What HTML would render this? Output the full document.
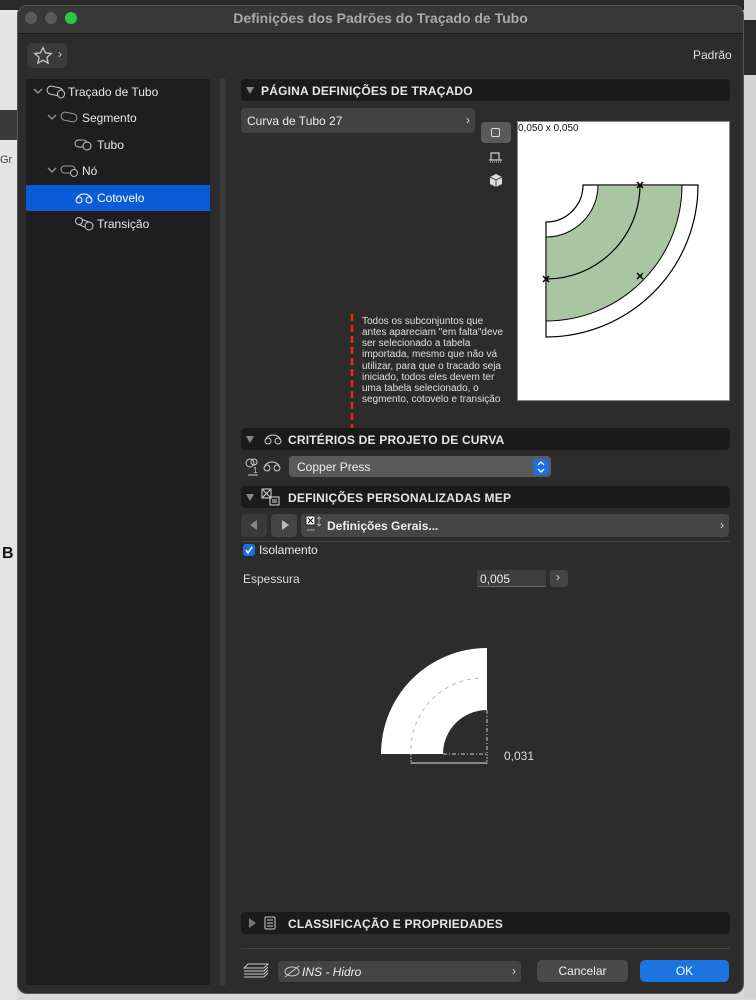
<!DOCTYPE html>
<html><head><meta charset="utf-8">
<style>
*{margin:0;padding:0;box-sizing:border-box}
body{width:756px;height:999px;overflow:hidden;background:#d9d9d9;font-family:"Liberation Sans",sans-serif;position:relative}
.a{position:absolute}
.t{position:absolute;white-space:nowrap}
.hdr{position:absolute;left:241px;width:489px;height:22px;background:#1b1b1b;border-radius:4px}
.hdr .tx{position:absolute;top:5px;font-size:12px;font-weight:bold;color:#e6e6e6;letter-spacing:.2px}
.tri{position:absolute;left:5px;top:8px;width:0;height:0;border-left:4px solid transparent;border-right:4px solid transparent;border-top:7px solid #8a8a8a}
.row{position:absolute;left:26px;width:184px;height:26px;font-size:12px;color:#e8e8e8}
.row span{position:absolute;top:6px}
.chev{position:absolute;top:9px}
</style></head><body>
<div class="a" style="left:0;top:0;width:756px;height:10px;background:#2a2a2a"></div>
<div class="a" style="left:0;top:10px;width:17px;height:990px;background:#e4e4e4"></div>
<div class="a" style="left:0;top:110px;width:17px;height:30px;background:#3a3a3a"></div>
<div class="t" style="left:0;top:154px;font-size:11px;color:#444">Gr</div>
<div class="t" style="left:2px;top:545px;font-size:16px;font-weight:bold;color:#111">B</div>
<div class="a" style="left:744px;top:0;width:12px;height:999px;background:#d4d4d4"></div>
<div class="a" style="left:744px;top:20px;width:12px;height:55px;background:#2a2a2a"></div>
<div class="a" style="left:17px;top:5px;width:727px;height:989px;background:#2c2c2c;border-radius:10px;border:1px solid #555;overflow:hidden">
  <div class="a" style="left:0;top:0;width:727px;height:28px;background:#383838;border-bottom:1px solid #1a1a1a"></div>
</div>
<div class="a" style="left:25px;top:12px;width:12px;height:12px;border-radius:50%;background:#5a5a5a"></div>
<div class="a" style="left:45px;top:12px;width:12px;height:12px;border-radius:50%;background:#5a5a5a"></div>
<div class="a" style="left:65px;top:12px;width:12px;height:12px;border-radius:50%;background:#2ac840"></div>
<div class="t" style="left:17px;width:727px;text-align:center;top:10px;font-size:14px;font-weight:bold;color:#a9a9a9">Definições dos Padrões do Traçado de Tubo</div>
<div class="a" style="left:27px;top:43px;width:40px;height:25px;background:#3b3b3b;border-radius:5px"></div>
<svg class="a" style="left:33px;top:46px" width="20" height="19" viewBox="0 0 20 19"><path d="M10 1.5l2.5 5.4 5.8.6-4.4 3.9 1.3 5.8L10 14.2l-5.2 3 1.3-5.8L1.7 7.5l5.8-.6z" fill="none" stroke="#cfcfcf" stroke-width="1.2"/></svg>
<div class="t" style="left:58px;top:47px;font-size:12px;color:#ccc">›</div>
<div class="t" style="left:693px;top:48px;font-size:12px;color:#e0e0e0">Padrão</div>
<div class="a" style="left:26px;top:79px;width:184px;height:906px;background:#1e1e1e"></div>
<div class="a" style="left:220px;top:79px;width:6px;height:906px;background:#393939"></div>
<div class="row" style="top:79px"><svg class="chev" style="left:7px" width="10" height="7"><path d="M1 1l4 4 4-4" fill="none" stroke="#999" stroke-width="1.3"/></svg><svg class="a" style="left:20px;top:6px" width="20" height="14"><rect x="1" y="2" width="16" height="8" rx="4" transform="rotate(12 9 6)" fill="none" stroke="#ccc"/><ellipse cx="15" cy="9" rx="3.5" ry="4" fill="#1e1e1e" stroke="#ccc"/></svg><span style="left:42px">Traçado de Tubo</span></div>
<div class="row" style="top:105px"><svg class="chev" style="left:21px" width="10" height="7"><path d="M1 1l4 4 4-4" fill="none" stroke="#999" stroke-width="1.3"/></svg><svg class="a" style="left:34px;top:6px" width="20" height="14"><rect x="1" y="2" width="16" height="8" rx="4" transform="rotate(12 9 6)" fill="none" stroke="#999"/></svg><span style="left:56px">Segmento</span></div>
<div class="row" style="top:132px"><svg class="a" style="left:48px;top:6px" width="20" height="14"><rect x="1" y="2" width="12" height="7" rx="3.5" fill="none" stroke="#bbb"/><circle cx="13" cy="8" r="4" fill="#1e1e1e" stroke="#ccc"/></svg><span style="left:71px">Tubo</span></div>
<div class="row" style="top:158px"><svg class="chev" style="left:21px" width="10" height="7"><path d="M1 1l4 4 4-4" fill="none" stroke="#999" stroke-width="1.3"/></svg><svg class="a" style="left:34px;top:6px" width="20" height="15"><rect x="1" y="2" width="14" height="7" rx="3.5" fill="none" stroke="#999"/><circle cx="14" cy="9" r="3.5" fill="#1e1e1e" stroke="#bbb"/></svg><span style="left:56px">Nó</span></div>
<div class="row" style="top:185px;background:#0a5cd6"><svg class="a" style="left:48px;top:7px" width="20" height="13"><path d="M3 7a7 5 0 0 1 14 0" fill="none" stroke="#fff"/><circle cx="5" cy="8" r="3" fill="none" stroke="#fff"/><circle cx="15" cy="8" r="3" fill="none" stroke="#fff"/></svg><span style="left:71px;color:#fff">Cotovelo</span></div>
<div class="row" style="top:211px"><svg class="a" style="left:48px;top:5px" width="20" height="15"><path d="M4 2l11 4v7L4 8z" fill="none" stroke="#ccc"/><circle cx="5" cy="5" r="3.5" fill="#1e1e1e" stroke="#ccc"/><circle cx="15" cy="10" r="4" fill="#1e1e1e" stroke="#ccc"/></svg><span style="left:71px">Transição</span></div>

<div class="hdr" style="top:79px"><div class="tri"></div><div class="tx" style="left:20px">PÁGINA DEFINIÇÕES DE TRAÇADO</div></div>
<div class="a" style="left:241px;top:108px;width:234px;height:25px;background:#424242;border-radius:4px"></div>
<div class="t" style="left:247px;top:114px;font-size:12px;color:#eee">Curva de Tubo 27</div>
<div class="t" style="left:466px;top:113px;font-size:12px;color:#ddd">›</div>
<div class="a" style="left:481px;top:122px;width:30px;height:21px;background:#5b5b5b;border-radius:4px"></div>
<div class="a" style="left:491px;top:128px;width:9px;height:9px;border:1.3px solid #ddd;border-radius:2px"></div>
<svg class="a" style="left:488px;top:150px" width="16" height="14"><path d="M3 10V3h8v7M1 10h13" fill="none" stroke="#ccc" stroke-width="1.2"/><path d="M2 12h11" stroke="#ccc" stroke-dasharray="1 1"/></svg>
<svg class="a" style="left:488px;top:173px" width="16" height="16"><path d="M8 1l6 3v7l-6 3-6-3V4z" fill="#ddd"/><path d="M2 4l6 3 6-3M8 7v7" fill="none" stroke="#444"/></svg>
<div class="a" style="left:517px;top:121px;width:213px;height:280px;background:#fff;border:1px solid #888"></div>
<div class="t" style="left:518px;top:123px;font-size:10px;color:#111">0,050 x 0,050</div>
<svg class="a" style="left:517px;top:121px" width="213" height="280">
<g transform="translate(29,64)">
<path d="M37 0H152A152 152 0 0 1 0 152V37A37 37 0 0 0 37 0Z" fill="#fff" stroke="#000" stroke-width="1.2"/>
<path d="M52 0H136A136 136 0 0 1 0 136V52A52 52 0 0 0 52 0Z" fill="#a9c6a3" stroke="#000" stroke-width="1"/>
<path d="M94 0A94 94 0 0 1 0 94" fill="none" stroke="#000" stroke-width="1.2"/>
<g stroke="#000" stroke-width="1.5"><path d="M91 -3l6 6M97 -3l-6 6"/><path d="M-3 91l6 6M3 91l-6 6"/><path d="M91 88l6 6M97 88l-6 6"/></g>
</g></svg>
<svg class="a" style="left:349px;top:314px" width="6" height="130"><path d="M3 0V120" stroke="#e8291c" stroke-width="2.5" stroke-dasharray="7 4"/><path d="M0 120h6l-3 9z" fill="#e8291c"/></svg>
<div class="t" style="left:362px;top:316px;font-size:10px;line-height:11.15px;color:#e0e0e0">Todos os subconjuntos que<br>antes apareciam "em falta"deve<br>ser selecionado a tabela<br>importada, mesmo que não vá<br>utilizar, para que o tracado seja<br>iniciado, todos eles devem ter<br>uma tabela selecionado, o<br>segmento, cotovelo e transição</div>

<div class="hdr" style="top:428px"><div class="tri"></div><svg class="a" style="left:22px;top:5px" width="20" height="12"><path d="M3 7a7 5 0 0 1 14 0" fill="none" stroke="#ccc"/><circle cx="5" cy="8" r="3" fill="none" stroke="#ccc"/><circle cx="15" cy="8" r="3" fill="none" stroke="#ccc"/></svg><div class="tx" style="left:47px">CRITÉRIOS DE PROJETO DE CURVA</div></div>
<svg class="a" style="left:244px;top:457px" width="40" height="20"><circle cx="6" cy="6" r="4" fill="none" stroke="#ccc"/><circle cx="10" cy="5" r="3" fill="none" stroke="#ccc"/><text x="9" y="16" font-size="8" fill="#ccc" font-family="Liberation Sans">1</text><path d="M4 18h10" stroke="#ccc"/><path d="M21 10a7 5 0 0 1 14 0" fill="none" stroke="#ccc"/><circle cx="23" cy="11" r="3" fill="none" stroke="#ccc"/><circle cx="33" cy="11" r="3" fill="none" stroke="#ccc"/></svg>
<div class="a" style="left:289px;top:456px;width:262px;height:21px;background:#5a5a5a;border-radius:4px"></div>
<div class="t" style="left:297px;top:460px;font-size:12px;color:#eee">Copper Press</div>
<div class="a" style="left:533px;top:459px;width:16px;height:16px;background:#1b6fe0;border-radius:3px"></div>
<svg class="a" style="left:536px;top:460px" width="10" height="14"><path d="M2 5l3-3 3 3M2 9l3 3 3-3" fill="none" stroke="#fff" stroke-width="1.3"/></svg>

<div class="hdr" style="top:486px"><div class="tri"></div><svg class="a" style="left:20px;top:2px" width="20" height="19"><rect x="1" y="1" width="9" height="9" fill="none" stroke="#ddd"/><path d="M2 2l7 7M9 2l-7 7" stroke="#ddd"/><rect x="9" y="9" width="9" height="8" fill="none" stroke="#ddd"/><path d="M11 12h5M11 14h5" stroke="#ddd"/></svg><div class="tx" style="left:47px">DEFINIÇÕES PERSONALIZADAS MEP</div></div>
<div class="a" style="left:241px;top:514px;width:26px;height:23px;background:#3a3a3a;border-radius:4px"></div>
<div class="a" style="left:250px;top:520px;width:0;height:0;border-top:5px solid transparent;border-bottom:5px solid transparent;border-right:7px solid #888"></div>
<div class="a" style="left:271px;top:514px;width:26px;height:23px;background:#454545;border-radius:4px"></div>
<div class="a" style="left:282px;top:520px;width:0;height:0;border-top:5px solid transparent;border-bottom:5px solid transparent;border-left:7px solid #bbb"></div>
<div class="a" style="left:301px;top:514px;width:428px;height:23px;background:#454545;border-radius:4px"></div>
<svg class="a" style="left:305px;top:515px" width="20" height="20"><rect x="1" y="1" width="9" height="9" fill="#fff" stroke="#222"/><path d="M3 3l5 5M8 3l-5 5" stroke="#000"/><path d="M14 2v9M12 4l2-2 2 2M12 9l2 2 2-2M2 15h8" stroke="#9ab" fill="none"/></svg>
<div class="t" style="left:327px;top:519px;font-size:12px;font-weight:bold;color:#eee">Definições Gerais...</div>
<div class="t" style="left:720px;top:518px;font-size:12px;color:#ddd">›</div>
<div class="a" style="left:241px;top:541px;width:489px;height:1px;background:#444"></div>
<div class="a" style="left:243px;top:544px;width:12px;height:12px;background:#1b6fe0;border-radius:3px"></div>
<svg class="a" style="left:244px;top:545px" width="10" height="10"><path d="M2 5l2 3 4-6" fill="none" stroke="#fff" stroke-width="1.5"/></svg>
<div class="t" style="left:259px;top:543px;font-size:12px;color:#eee">Isolamento</div>
<div class="t" style="left:243px;top:572px;font-size:12px;color:#ddd">Espessura</div>
<div class="a" style="left:477px;top:570px;width:69px;height:17px;background:#3d3d3d;border-bottom:1px solid #666"></div>
<div class="t" style="left:480px;top:572px;font-size:12px;color:#eee">0,005</div>
<div class="a" style="left:550px;top:570px;width:18px;height:17px;background:#444;border-radius:3px"></div>
<div class="t" style="left:556px;top:570px;font-size:12px;color:#ddd">›</div>
<svg class="a" style="left:370px;top:640px" width="180" height="140">
<g transform="translate(117,114)">
<path d="M0 -106V-44A44 44 0 0 0 -44 0H-106A106 106 0 0 1 0 -106Z" fill="#fff"/>
<path d="M-76 -5A72 72 0 0 1 -5 -76" fill="none" stroke="#bbb" stroke-dasharray="4 4"/>
<path d="M0 -44V0M-44 0H0" stroke="#ccc" stroke-dasharray="4 2 1 2"/>
<path d="M-76 0V10M0 0V10" stroke="#aaa" stroke-dasharray="2 1"/>
<path d="M-76 9H0" stroke="#bbb" stroke-width="1.2"/>
</g></svg>
<div class="t" style="left:504px;top:749px;font-size:12px;color:#ddd">0,031</div>

<div class="hdr" style="top:912px"><div class="a" style="left:8px;top:6px;width:0;height:0;border-top:5px solid transparent;border-bottom:5px solid transparent;border-left:7px solid #777"></div><svg class="a" style="left:23px;top:4px" width="12" height="14"><rect x="1" y="1" width="10" height="12" rx="1" fill="none" stroke="#ccc"/><path d="M3 4h6M3 7h6M3 10h6" stroke="#ccc"/></svg><div class="tx" style="left:47px">CLASSIFICAÇÃO E PROPRIEDADES</div></div>
<div class="a" style="left:241px;top:948px;width:489px;height:1px;background:#444"></div>
<svg class="a" style="left:242px;top:962px" width="28" height="18"><path d="M6 2h20l-4 4H2z M2 9h20l4-4 M2 12h20l4-4 M2 15h20l4-4" fill="none" stroke="#ccc"/></svg>
<div class="a" style="left:278px;top:961px;width:243px;height:21px;background:#444;border-radius:4px"></div>
<svg class="a" style="left:283px;top:965px" width="18" height="13"><ellipse cx="9" cy="6.5" rx="7" ry="4.5" fill="none" stroke="#ccc"/><path d="M2 12L16 1" stroke="#ccc"/></svg>
<div class="t" style="left:302px;top:965px;font-size:12px;font-style:italic;color:#eee">INS - Hidro</div>
<div class="t" style="left:512px;top:964px;font-size:12px;color:#ddd">›</div>
<div class="a" style="left:537px;top:960px;width:91px;height:22px;background:#4a4a4a;border-radius:5px"></div>
<div class="t" style="left:537px;width:91px;text-align:center;top:964px;font-size:12px;color:#eee">Cancelar</div>
<div class="a" style="left:640px;top:960px;width:89px;height:22px;background:#1b74e0;border-radius:5px"></div>
<div class="t" style="left:640px;width:89px;text-align:center;top:964px;font-size:12px;color:#fff">OK</div>
</body></html>
